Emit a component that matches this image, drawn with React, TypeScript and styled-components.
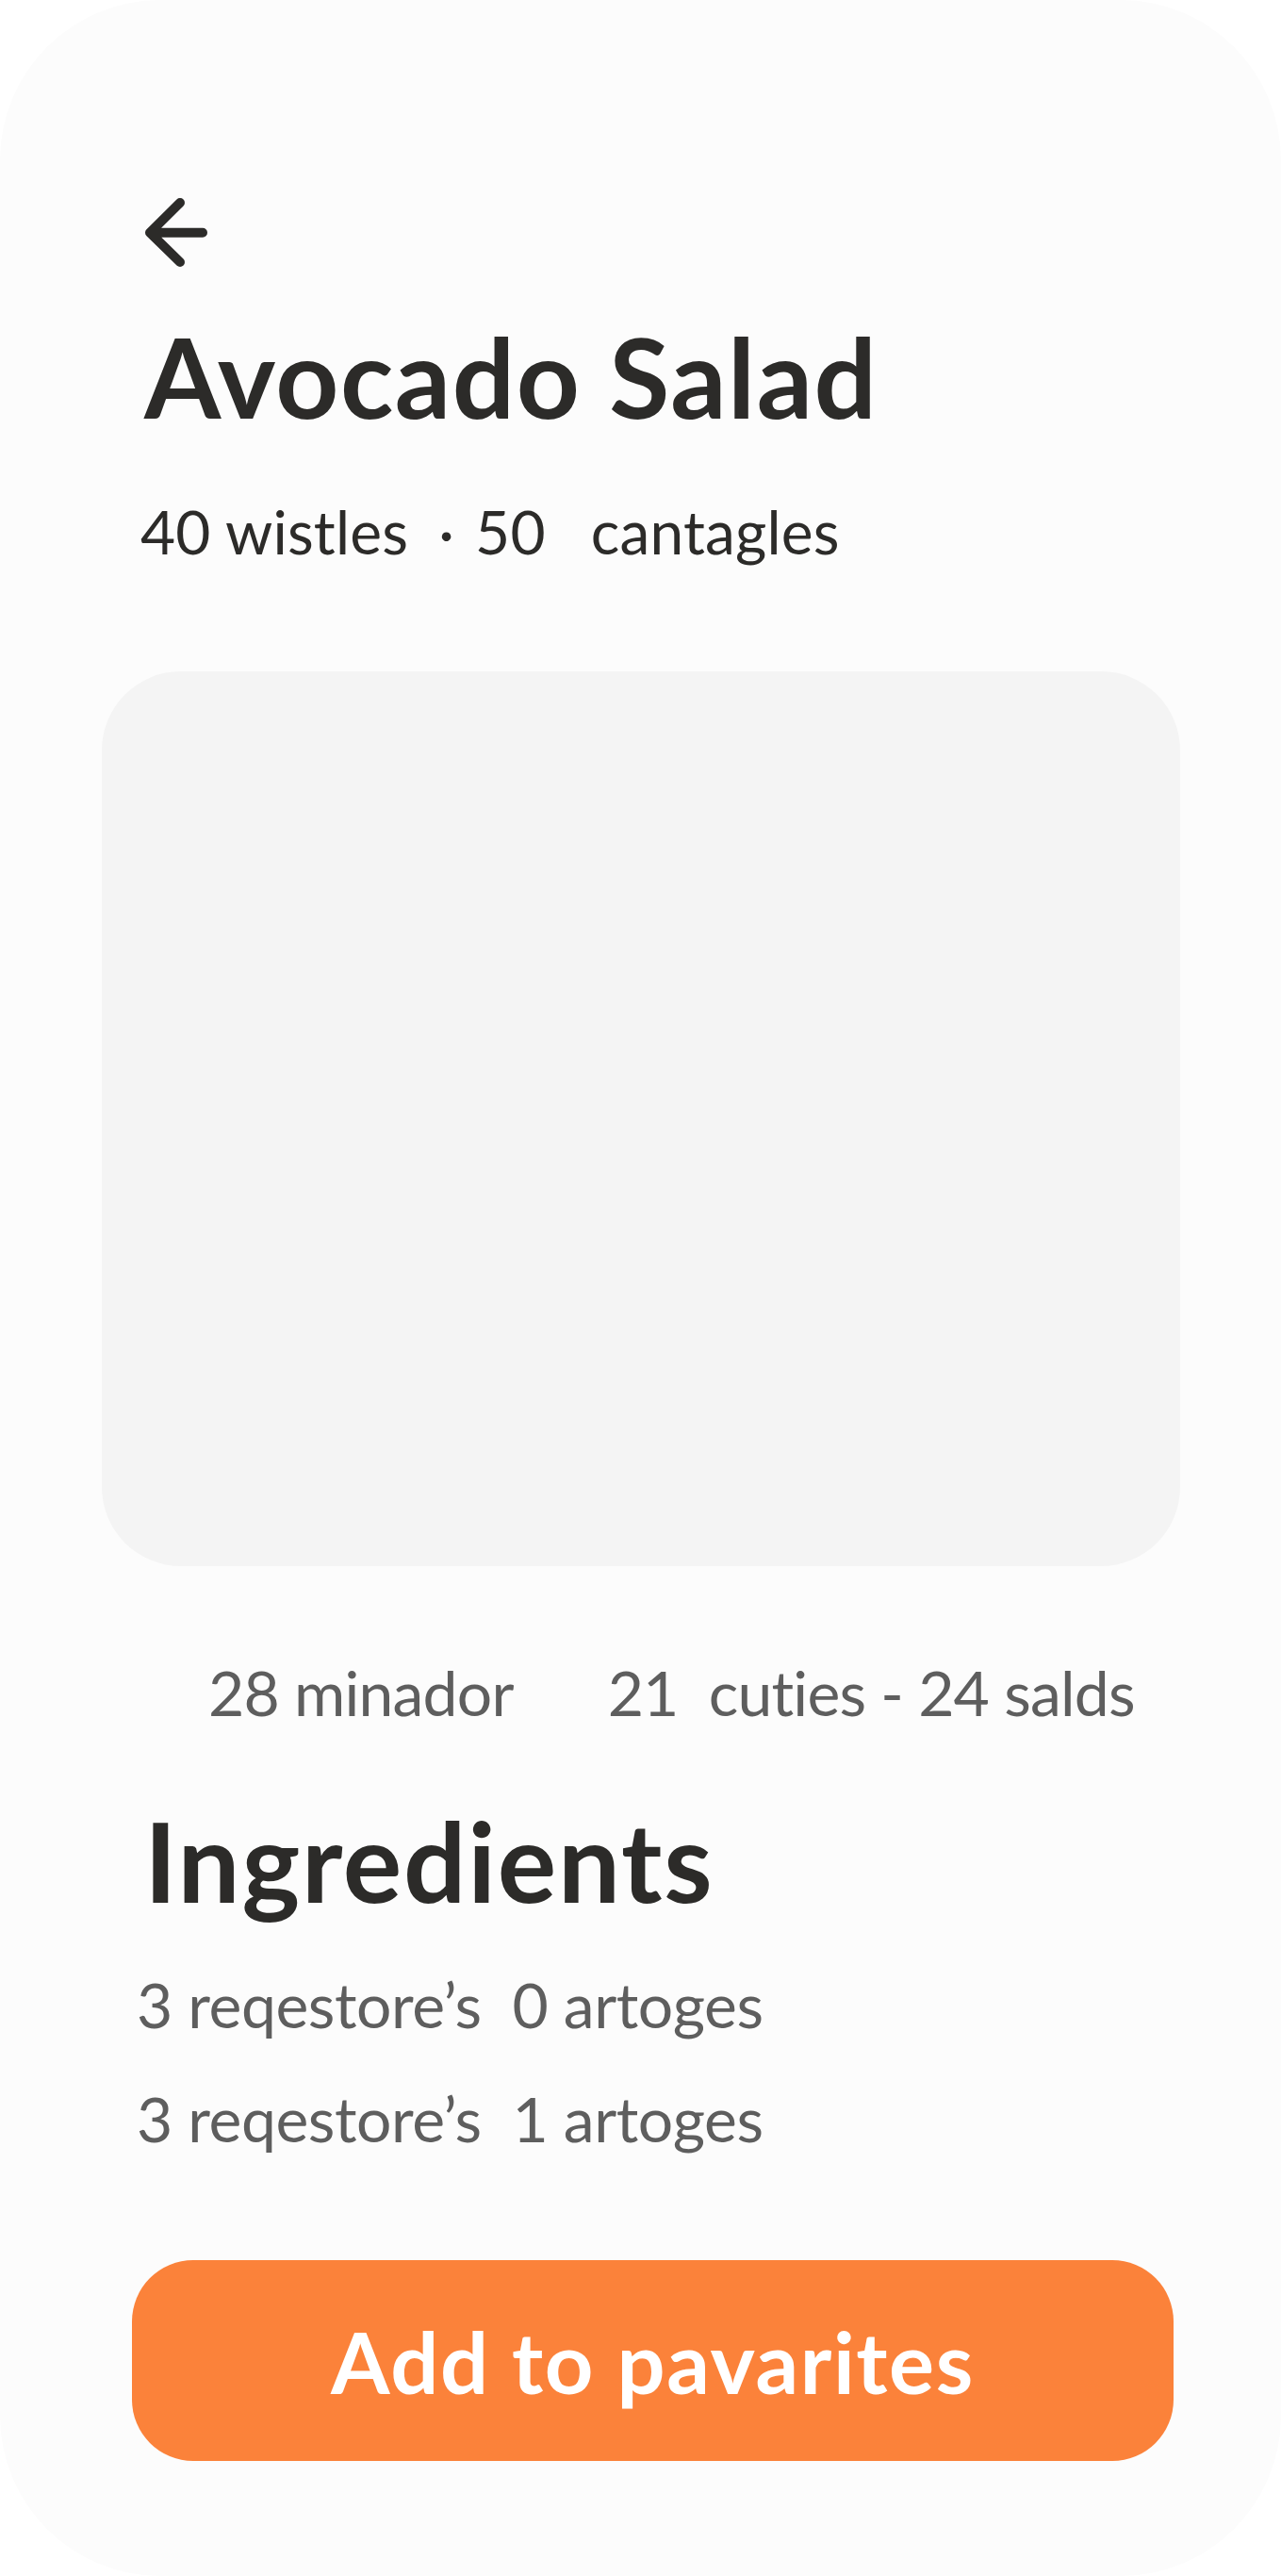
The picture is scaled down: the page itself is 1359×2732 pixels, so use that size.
import React from "react";
import styled, { createGlobalStyle } from "styled-components";

const GlobalStyle = createGlobalStyle`
  html, body {
    margin: 0;
    padding: 0;
    background: #ffffff;
  }
  * { box-sizing: border-box; }
`;

const Screen = styled.div`
  width: 1359px;
  min-height: 2732px;
  background: #fcfcfc;
  border-radius: 170px;
  padding: 210px 107px 0 108px;
  font-family: Lato, "Open Sans", sans-serif;
  color: #2c2b29;
  display: flex;
  flex-direction: column;
`;

const TextBlock = styled.div`
  padding-left: 45px;
  display: flex;
  flex-direction: column;
`;

const BackButton = styled.button`
  all: unset;
  width: 72px;
  height: 74px;
  display: block;
  cursor: pointer;
  color: #2c2b29;
`;

const Title = styled.h1<{ $top: number; $spacing: number }>`
  margin: ${(p) => p.$top}px 0 0;
  font-size: 117px;
  line-height: 140px;
  font-weight: 700;
  color: #2c2b29;
  letter-spacing: ${(p) => p.$spacing}px;
`;

const Meta = styled.div`
  margin: 55px 0 0 -4px;
  display: flex;
  align-items: baseline;
  font-size: 64px;
  line-height: 80px;
  color: #2c2b29;
  white-space: pre;
  letter-spacing: 0.2px;
`;

const MetaDot = styled.span`
  margin: 0 22px 0 32px;
`;

const MetaGap = styled.span`
  width: 48px;
`;

const ImagePlaceholder = styled.div`
  margin-top: 108px;
  width: 1144px;
  height: 949px;
  background: #f4f4f4;
  border-radius: 84px;
`;

const Stats = styled.div`
  margin-top: 94px;
  padding-left: 113px;
  display: flex;
  gap: 100px;
  font-size: 66px;
  line-height: 80px;
  color: #5e5e5e;
  white-space: pre;
  letter-spacing: -0.8px;
`;

const IngredientList = styled.div`
  margin: 43px 0 0 -8px;
  display: flex;
  flex-direction: column;
  gap: 41px;
`;

const Ingredient = styled.div`
  font-size: 66px;
  line-height: 80px;
  color: #5e5e5e;
  white-space: pre;
  letter-spacing: -0.45px;
`;

const ActionButton = styled.button`
  margin: 110px 0 0 32px;
  width: 1105px;
  height: 213px;
  border: none;
  border-radius: 65px;
  background: #fb823a;
  color: #ffffff;
  font-family: Lato, "Open Sans", sans-serif;
  font-size: 90px;
  font-weight: 700;
  letter-spacing: 1.6px;
  display: flex;
  align-items: center;
  justify-content: center;
  cursor: pointer;
  padding: 0;
`;

const ArrowIcon = () => (
  <svg width="72" height="74" viewBox="0 0 72 74" fill="none">
    <path
      d="M38 5 L6 36.7 L38 68 M6 36.7 L62 36.7"
      stroke="currentColor"
      strokeWidth="10"
      strokeLinecap="round"
      strokeLinejoin="round"
    />
  </svg>
);

export default function App() {
  return (
    <>
      <GlobalStyle />
      <Screen>
        <TextBlock>
          <BackButton aria-label="Back">
            <ArrowIcon />
          </BackButton>
          <Title $top={45} $spacing={1.5}>Avocado Salad</Title>
          <Meta>
            <span>40 wistles</span>
            <MetaDot>·</MetaDot>
            <span>50</span>
            <MetaGap />
            <span>cantagles</span>
          </Meta>
        </TextBlock>
        <ImagePlaceholder />
        <Stats>
          <span>28 minador</span>
          <span>21  cuties - 24 salds</span>
        </Stats>
        <TextBlock>
          <Title $top={68} $spacing={1.8}>Ingredients</Title>
          <IngredientList>
            <Ingredient>3 reqestore’s  0 artoges</Ingredient>
            <Ingredient>3 reqestore’s  1 artoges</Ingredient>
          </IngredientList>
        </TextBlock>
        <ActionButton>Add to pavarites</ActionButton>
      </Screen>
    </>
  );
}
